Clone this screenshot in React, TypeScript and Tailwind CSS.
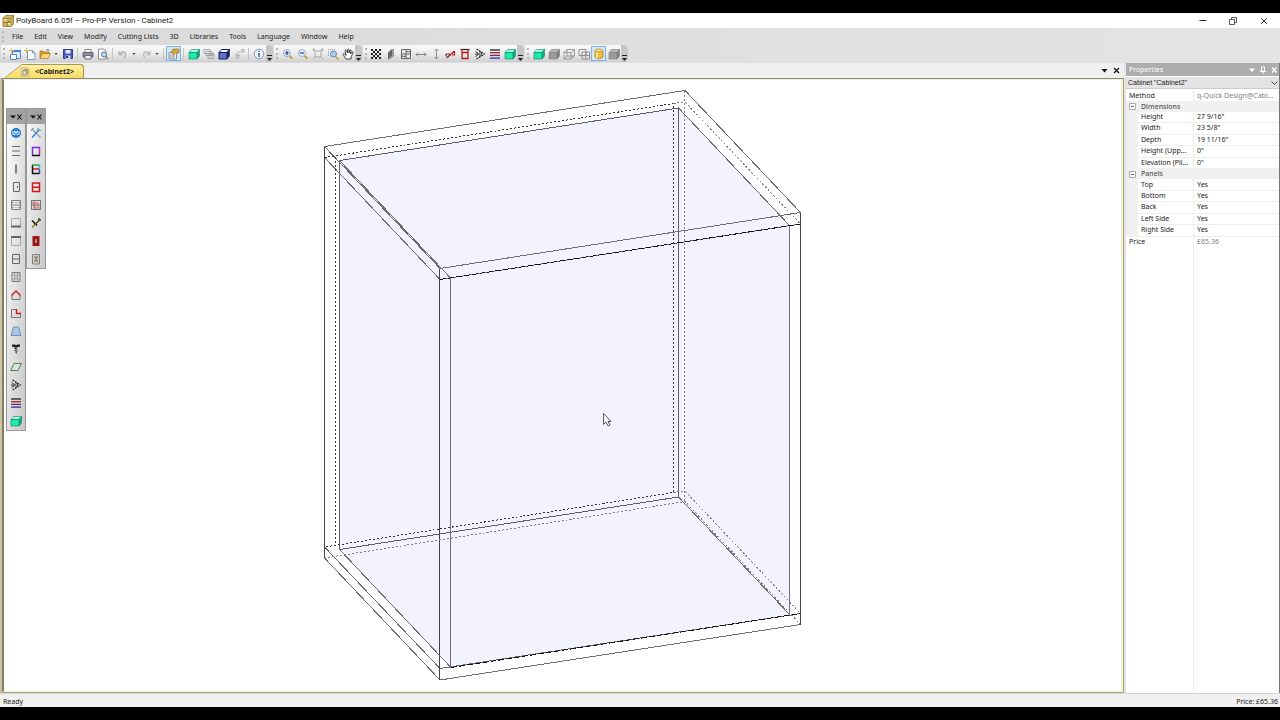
import { useState } from "react";
import type { ReactNode } from "react";

const MENUS = ["File", "Edit", "View", "Modify", "Cutting Lists", "3D", "Libraries", "Tools", "Language", "Window", "Help"];

const DIMENSIONS = [
  ["Height", '27 9/16"'],
  ["Width", '23 5/8"'],
  ["Depth", '19 11/16"'],
  ["Height (Upp...", '0"'],
  ["Elevation (Pli...", '0"'],
];

const PANELS = ["Top", "Bottom", "Back", "Left Side", "Right Side"];

function Cube({ fill = "#1eeaae", top = "#9dffe6", side = "#0cb884", stroke = "#0b7a5e" }) {
  return (
    <>
      <path d="M3.5 1.5h8l-2.5 3h-8z" fill={top} stroke={stroke} strokeWidth=".6" />
      <path d="M9 4.500l2.500-3v6.500l-2.500 3z" fill={side} stroke={stroke} strokeWidth=".6" />
      <path d="M1 4.500h8v6.500h-8z" fill={fill} stroke={stroke} strokeWidth=".6" />
    </>
  );
}

function Lens({ sign }: { sign: ReactNode }) {
  return (
    <>
      <path d="M7.500 8l3 2.700" stroke="#c99a2e" strokeWidth="1.800" />
      <circle cx="5" cy="5" r="3.500" fill="#e4f0fb" stroke="#8fa5c2" strokeWidth=".9" />
      <g stroke="#1c3f8f" strokeWidth="1.200">{sign}</g>
    </>
  );
}

const greyCube = <Cube fill="#9a9a9a" top="#b5b5b5" side="#7c7c7c" stroke="#808080" />;

const checker = Array.from({ length: 25 }, (_, i) => i)
  .filter((i) => i % 2 === 0)
  .map((i) => <rect key={i} x={1 + (i % 5) * 2} y={1 + Math.floor(i / 5) * 2} width="2" height="2" fill="#222" />);

const ICONS: Record<string, ReactNode> = {
  newProject: (
    <>
      <path d="M3.500 2.500h8v8h-8z" fill="#dbe9fb" stroke="#5b87c0" />
      <path d="M3 2h9v2H3z" fill="#3d7fd0" />
      <path d="M1.500 6.500h6v5h-6z" fill="#f6f9ff" stroke="#5b87c0" />
      <path d="M2.500 0v5M0 2.500h5" stroke="#e5c35a" />
    </>
  ),
  newFile: (
    <>
      <path d="M3.500 2.500h5l2.500 2.500v6.500H3.500z" fill="#f5f9ff" stroke="#7d97bb" />
      <path d="M8.500 2.500V5H11" fill="none" stroke="#7d97bb" />
      <path d="M2.500 0v5M0 2.500h5" stroke="#e5b93a" />
    </>
  ),
  open: (
    <>
      <path d="M1 10V3h3l1 1h5v2" fill="#d9a02c" stroke="#a87414" strokeWidth=".7" />
      <path d="M1 10.500l2.500-5h8l-2.500 5z" fill="#ffd977" stroke="#a87414" strokeWidth=".7" />
      <path d="M7 2.500q2-2 3.500 0" fill="none" stroke="#3d6fb4" />
    </>
  ),
  save: (
    <>
      <path d="M1.500 1.500h9v9h-9z" fill="#4a55b8" stroke="#343d92" />
      <path d="M3.500 2h5v3.500h-5z" fill="#e6ecff" />
      <path d="M3.500 7.500h5V11h-5z" fill="#c9d1ee" />
      <path d="M4 8h2v2H4z" fill="#232b7a" />
    </>
  ),
  print: (
    <>
      <path d="M3 1.500h6V5H3z" fill="#fff" stroke="#667" strokeWidth=".8" />
      <path d="M1 4.500h10v4.500H1z" fill="#8a93a3" stroke="#4c5563" strokeWidth=".8" />
      <path d="M3 7.500h6v3.500H3z" fill="#eef3fb" stroke="#4c5563" strokeWidth=".8" />
    </>
  ),
  preview: (
    <>
      <path d="M1.500 1h5.500l2 2v8h-7.500z" fill="#fff" stroke="#778" strokeWidth=".8" />
      <circle cx="7" cy="6.500" r="2.500" fill="#b9dcf5" stroke="#49749f" />
      <path d="M8.800 8.500l2.500 2.500" stroke="#b78b2d" strokeWidth="1.500" />
    </>
  ),
  undo: <path d="M2 3v3.500h3.500M2.500 6q4.500-4 6 0q.5 2.500-2 4" fill="none" stroke="#b2b2b2" strokeWidth="1.300" />,
  redo: <path d="M10 3v3.500H6.500M9.500 6q-4.500-4-6 0q-.5 2.500 2 4" fill="none" stroke="#bcbcbc" strokeWidth="1.300" />,
  props: (
    <>
      <path d="M1 4.500h7.500v6.500H1z" fill="#eef0f2" stroke="#6e7780" strokeWidth=".8" />
      <path d="M2 7h5M2 9h5" stroke="#6e7780" strokeWidth=".8" />
      <path d="M3 4l2-3h6v4H7.500L6 6.500z" fill="#dba83d" stroke="#8c6720" strokeWidth=".6" />
    </>
  ),
  cube: <Cube />,
  greyCube,
  copies: (
    <g fill="#eee" stroke="#9a9a9a" strokeWidth=".8">
      <path d="M1 1.500h6v4H1zM3 3.500h6v4H3zM5 5.500h6v5H5z" />
      <path d="M5 7h6M7 5.500v5M9 5.500v5" />
    </g>
  ),
  blueCube: (
    <>
      <path d="M3.500 1.500h8l-2.500 3h-8z" fill="#eef1ff" stroke="#141a55" />
      <path d="M9 4.500l2.500-3v6.500l-2.500 3z" fill="#1a2470" stroke="#141a55" strokeWidth=".6" />
      <path d="M1 4.500h8v6.500h-8z" fill="#5f6fc8" stroke="#141a55" />
    </>
  ),
  nodes: (
    <g fill="none" stroke="#aaa" strokeWidth=".9">
      <path d="M8.500 1.500h2.500V4H8.500zM5 4h2.500M2 7h5l-2 4M4 4.500v6M2 11l3-4" />
    </g>
  ),
  info: (
    <>
      <circle cx="6" cy="6" r="4.800" fill="#f0f6ff" stroke="#8796ad" />
      <path d="M6 5v4M6 2.800v1.200" stroke="#1c63c7" strokeWidth="1.500" />
    </>
  ),
  zoomIn: <Lens sign={<path d="M3 5h4M5 3v4" />} />,
  zoomOut: <Lens sign={<path d="M3 5h4" />} />,
  fit: <path d="M3 3h6v6H3zM1 1l2 2M11 1L9 3M1 11l2-2M11 11L9 9M1 3V1h2M9 1h2v2" fill="none" stroke="#999" strokeWidth=".8" />,
  zoomArea: (
    <>
      <path d="M1 1.500h8M1.500 1v8" stroke="#999" strokeDasharray="1 1" />
      <path d="M8.500 8.500l3 3" stroke="#c99a2e" strokeWidth="1.500" />
      <circle cx="6.500" cy="6" r="3" fill="#a9cdee" stroke="#6b87a9" />
    </>
  ),
  hand: <path d="M4 11L1 6.500q0-1.500 1.500-.5L4 7.500L3 2.500q1-1.500 1.500 0L5.500 5V1.500q1-1 1.500 0V5l1-3q1-.5 1 .5L8.500 6l1.500-2q1.500-.5 1 1L9 9v2z" fill="#fff" stroke="#222" strokeWidth=".8" />,
  checker: <>{checker}</>,
  slab: (
    <>
      <path d="M3 4.500l4-3.500v7l-4 3.500z" fill="#666" />
      <path d="M7 1h2v7L5 11.500H3L7 8z" fill="#999" />
    </>
  ),
  layout: <path d="M1.500 1.500h9v9h-9zM6 1.500v9M1.500 6h9M6 3.700h4.500M1.500 8.300H6" fill="none" stroke="#666" />,
  horizontal: <path d="M1 6.500h10M3 4.500l-2 2l2 2M9 4.500l2 2l-2 2" fill="none" stroke="#808080" />,
  vertical: <path d="M6.500 1v10M4.500 3l2-2l2 2M4.500 9l2 2l2-2" fill="none" stroke="#909090" />,
  measure: (
    <>
      <path d="M1.500 6l2 4L5.500 6.500" fill="none" stroke="#222" />
      <path d="M2 6h4M5 8l5.500-5M8 7h2.500V3.500" fill="none" stroke="#b2191f" strokeWidth="1.200" />
    </>
  ),
  frame: (
    <>
      <path d="M1.500 1.500h9" stroke="#222" strokeWidth="1.200" />
      <path d="M3 4.500h6v6H3z" fill="none" stroke="#b2191f" strokeWidth="1.300" />
      <path d="M3 1v3M9 1v3" stroke="#b2191f" strokeWidth="1.200" />
    </>
  ),
  eye: (
    <>
      <path d="M2.500 1l8 5l-8 5" fill="none" stroke="#222" strokeDasharray="2 .8" strokeWidth="1.100" />
      <path d="M1 6h5M5 3.500l3 2.500l-3 2.500M1.500 3.500l3 2M1.500 8.500l3-2" fill="none" stroke="#222" strokeWidth=".9" />
    </>
  ),
  layers: (
    <g strokeWidth="1.300">
      <path d="M1 2h10" stroke="#222" />
      <path d="M1 4.700h10" stroke="#a01d37" />
      <path d="M1 7.400h10" stroke="#7a2a48" />
      <path d="M1 10.100h10" stroke="#2630b5" />
    </g>
  ),
  wireCube: <path d="M1 4.500h7V11H1zM1 4.500l3-3h7.500V8L8 11M8 4.500l3.500-3M4 1.500V8h7.500M4 8l-3 3" fill="none" stroke="#888" strokeWidth=".8" />,
  wireWindow: <path d="M1 1.500h7v6H1zM4 4h7.500v7H4zM7.700 4v7M4 7.500h7.500" fill="none" stroke="#888" strokeWidth=".9" />,
  cylinder: (
    <>
      <path d="M2 2.500v7q4 2.500 8 0v-7z" fill="#eebd3a" stroke="#a77a17" strokeWidth=".7" />
      <path d="M4 3v7" stroke="#fff0b0" strokeWidth="1.500" />
      <ellipse cx="6" cy="2.500" rx="4" ry="1.400" fill="#ffe591" stroke="#a77a17" strokeWidth=".7" />
    </>
  ),
  wheel: (
    <>
      <circle cx="6" cy="6" r="5" fill="#1d7bd1" />
      <path d="M4 4l4 4M8 4L4 8M3 4.500v3M9 4.500v3" stroke="#fff" strokeWidth="1.100" />
    </>
  ),
  tools: (
    <>
      <path d="M2.500 2.500l8 8" stroke="#8fa3b3" strokeWidth="1.500" />
      <path d="M9.500 2.500L2 10.500" stroke="#3387d2" strokeWidth="1.500" />
      <path d="M1 3.500L3.500 1M8 1v2.500h3" fill="none" stroke="#7894a8" strokeWidth="1.200" />
    </>
  ),
  shelves: <path d="M2 1.500h8M2 6h8M2 10.500h8" stroke="#666" />,
  upright: <path d="M6 1.500v9" stroke="#555" strokeWidth="1.400" />,
  door: <path d="M3.500 1.500h6v9h-6zM7.500 5v2" fill="none" stroke="#666" />,
  drawers: <path d="M1.500 1.500h9v9h-9zM1.500 6h9M6 3v1M6 8v1M1.500 3.500h2M8.500 3.500h2M1.500 8.500h2M8.500 8.500h2" fill="none" stroke="#808080" />,
  base: (
    <>
      <path d="M1.500 9V1.500h9V9" fill="none" stroke="#aaa" />
      <path d="M1 9.500h10" stroke="#666" strokeWidth="2" />
    </>
  ),
  crown: (
    <>
      <path d="M1.500 3v7.500h9V3" fill="none" stroke="#aaa" />
      <path d="M1 2h10" stroke="#666" strokeWidth="2" />
    </>
  ),
  shelf: <path d="M2.500 1.500h7v9h-7zM2.500 6h7" fill="none" stroke="#666" />,
  backPanel: (
    <>
      <path d="M2 1.500h8v9H2z" fill="none" stroke="#777" />
      <path d="M4.500 2v8M7.500 2v8M2 4h8M4.500 6h3M2 8h8" fill="none" stroke="#999" strokeWidth=".8" />
    </>
  ),
  roof: (
    <>
      <path d="M2 6v4.500h8V6" fill="none" stroke="#777" />
      <path d="M1.500 6.500L6 2l4.500 4.500" fill="none" stroke="#d01818" strokeWidth="1.400" />
    </>
  ),
  notch: (
    <>
      <path d="M6 2.500H1.500v8h9V7" fill="none" stroke="#777" />
      <path d="M6.500 2v4.500H11" fill="none" stroke="#d01818" strokeWidth="1.400" />
    </>
  ),
  trapezoid: <path d="M3.500 2h5l2.500 8.500H1z" fill="#a9c6ea" stroke="#5f7da3" strokeWidth=".8" />,
  screw: (
    <>
      <path d="M2 1.500h3l1 1l1-1h3v2L7 4.500H5l-3-1z" fill="#222" />
      <path d="M6 4v2M4.500 5.500l3 1M4.500 7.500l3 1M5.500 9.500l1.500 .5" fill="none" stroke="#333" strokeWidth="1.100" />
    </>
  ),
  parallelogram: <path d="M4 2.500h7.500l-3.500 7H.7z" fill="#cfead0" stroke="#5a6b5a" strokeWidth=".9" />,
  colorFrame: (
    <>
      <path d="M2.500 10.500v-8h7" fill="none" stroke="#7a2ad8" strokeWidth="1.500" />
      <path d="M9.500 1.700v8.500" stroke="#c029a9" strokeWidth="1.500" />
      <path d="M2 10.500h8" stroke="#111" strokeWidth="1.500" />
    </>
  ),
  colorShelves: (
    <g fill="none" strokeWidth="1.500">
      <path d="M2.500 6V2" stroke="#111" />
      <path d="M2 2h7" stroke="#17a53a" />
      <path d="M9.500 1.500v4" stroke="#28c7d4" />
      <path d="M2.500 6h7" stroke="#d01818" />
      <path d="M2.500 6v4.500h7" stroke="#111" />
      <path d="M9.500 6.500v4" stroke="#2a3ce0" />
    </g>
  ),
  redShelf: <path d="M2.500 2h7v8.500h-7zM2.500 6.200h7" fill="none" stroke="#d01818" strokeWidth="1.500" />,
  redGrid: (
    <>
      <path d="M1.500 1.500h9v9h-9zM4 1.500v9M1.500 6h9" fill="none" stroke="#666" strokeWidth=".9" />
      <path d="M2 4h6v4M5 6v3h5" fill="none" stroke="#e05858" />
    </>
  ),
  drill: (
    <>
      <path d="M2 3.500l5 5M8.500 1.500l2 2" stroke="#111" strokeWidth="1.600" />
      <path d="M2 10.500L10 2.500" stroke="#8a7b14" strokeWidth="1.400" />
      <path d="M5 7.500l5-5" stroke="#222" />
    </>
  ),
  redDoor: (
    <>
      <path d="M2.500 1h7v10h-7z" fill="#a31515" />
      <path d="M4.500 3.500h3v5h-3z" fill="#c98585" stroke="#6e0c0c" strokeWidth=".8" />
    </>
  ),
  safe: (
    <>
      <path d="M2.500 1.500h7v9.500h-7z" fill="#d2cab6" stroke="#777" strokeWidth=".9" />
      <path d="M4 4h4L5 6l3 2H4" fill="none" stroke="#666" strokeWidth=".9" />
    </>
  ),
  cabinetFile: (
    <>
      <path d="M1.500 1h7l2 2v8h-9z" fill="#fbf6e0" stroke="#a39458" strokeWidth=".8" />
      <path d="M3.500 4l1.500-1h4v5l-1.500 1.500h-4zM3.500 4.500h4v5" fill="#efe3b8" stroke="#7b6a35" strokeWidth=".8" />
    </>
  ),
};

function Icon({ name, className = "size-3" }: { name: string; className?: string }) {
  return (
    <svg viewBox="0 0 12 12" className={`${className} shrink-0`} aria-hidden="true">
      {ICONS[name]}
    </svg>
  );
}

function ToolButton({ icon, active = false }: { icon: string; active?: boolean }) {
  return (
    <button
      type="button"
      aria-label={icon}
      className={`flex h-[15px] w-[15px] min-w-0 items-center justify-center border ${
        active ? "border-[#7fb2e0] bg-[#d3e8f9]" : "border-transparent hover:bg-white/60"
      }`}
    >
      <Icon name={icon} />
    </button>
  );
}

function DropArrow() {
  return (
    <button type="button" aria-label="More" className="flex h-[15px] w-2 shrink-0 items-center justify-center text-[#444]">
      <svg viewBox="0 0 5 3" className="h-[2px] w-1" aria-hidden="true">
        <path d="M0 0h5L2.500 3z" fill="currentColor" />
      </svg>
    </button>
  );
}

function Toolbar({ items, className = "" }: { items: string[]; className?: string }) {
  return (
    <div
      role="toolbar"
      className={`flex h-[17px] items-center rounded-r-[4px] bg-linear-to-b from-[#fafafa] via-[#ececec] to-[#cfcfcf] ${className}`}
    >
      <span className="mx-[2px] h-[11px] shrink-0 border-l-2 border-dotted border-[#b5b5b5]" />
      {items.map((item, i) => {
        if (item === "|") return <span key={i} className="mx-[2px] h-3 w-px bg-[#c4c4c4]" />;
        if (item === "v") return <DropArrow key={i} />;
        return <ToolButton key={i} icon={item.replace("*", "")} active={item.endsWith("*")} />;
      })}
      <button type="button" aria-label="Toolbar options" className="flex h-[17px] w-[7px] shrink-0 items-end justify-center rounded-r-[4px] bg-[#c6c6c6] pb-px">
        <svg viewBox="0 0 5 6" className="h-[6px] w-[5px]" aria-hidden="true">
          <path d="M0 .5h5" stroke="#222" />
          <path d="M0 3h5L2.500 6z" fill="#222" />
        </svg>
      </button>
    </div>
  );
}

function Palette({ items, className }: { items: string[]; className: string }) {
  return (
    <div className={`flex w-5 flex-col border border-[#989898] bg-linear-to-br from-[#fbfbfb] to-[#c8c8c8] ${className}`}>
      <div className="flex h-[15px] items-center justify-center bg-[#a3a3a3]">
        <svg viewBox="0 0 14 8" className="h-2 w-[14px]" aria-hidden="true">
          <path d="M1 2.500h6L4 5.500z" fill="#111" />
          <path d="M8.500 1.500l4 5M12.500 1.500l-4 5" stroke="#111" strokeWidth="1.100" />
        </svg>
      </div>
      {items.map((item) => (
        <button key={item} type="button" aria-label={item} className="flex h-[18px] items-center justify-center hover:bg-white/60">
          <Icon name={item} />
        </button>
      ))}
    </div>
  );
}

// Visible edges of the carcass. Hidden edges are drawn dashed further down.
const UPRIGHTS = "M324.500 146.500V558M439.500 268.500V680M800.500 212.500V624.500";

const EDGES = [
  "M324.500 146.500L685 90.500L800.500 212.500L440 268.500Z",
  "M324.500 157.500L440 279.500L800.500 224",
  "M324.500 547L440 668.500L800.500 613.500",
  "M324.500 558L440 680L800.500 624.500",
  "M339.500 160.500L451 278.500M678.500 108L789.500 225.500",
  "M339.500 549.500L451 667.500M678.500 497L789.500 614.500",
];

function CabinetView() {
  return (
    <svg className="block h-full w-full" role="img" aria-label="Cabinet2">
      <g transform="translate(-4 -80)" fill="none" shapeRendering="crispEdges">
        <path d="M339.500 160.500L678.500 108L789.500 225.500V614.500L451 667.500L339.500 549.500Z" fill="#f3f3ff" />
        <path d="M339.500 549.500V160.500L678.500 108V497Z" stroke="#5c5c74" />
        <path d="M450.500 278.500V667.500M789.500 225.500V614.500" stroke="#6c6c90" />
        {EDGES.map((d) => (
          <path key={d} d={d} stroke="#6e6e6e" />
        ))}
        <path d={UPRIGHTS} stroke="#444" />
        <path d="M440 279.500L800.500 224M451 667.500L800.500 613.500" stroke="#111" strokeDasharray="6 2" />
        <path d="M324.500 157.500L673.500 103.500V492.500L324.500 547M335.500 157V546" stroke="#333" strokeDasharray="2 2" />
        <path d="M673.500 103.500L685 102L800.500 224M684.500 91V502M673.500 492.500L685 491L800.500 613.500M324.500 558L685 501.500L800.500 624.500" stroke="#808080" strokeDasharray="2 2" />
        <path d="M603.500 413.500v11l2.500-2.500l2 4l2-1l-2-3.500h3z" fill="#fff" stroke="#444" strokeWidth=".9" shapeRendering="auto" />
      </g>
    </svg>
  );
}

function GroupRow({ label, open, onToggle }: { label: string; open: boolean; onToggle: () => void }) {
  return (
    <tr className="bg-[#f0f0f0]">
      <td className="p-0 text-center align-middle">
        <button type="button" aria-label={label} aria-expanded={open} onClick={onToggle} className="mx-auto block">
          <svg viewBox="0 0 7 7" className="size-[7px]" aria-hidden="true">
            <path d="M.5 .5h6v6h-6z" fill="#fff" stroke="#aaa" />
            <path d={open ? "M2 3.500h3" : "M2 3.500h3M3.500 2v3"} stroke="#666" />
          </svg>
        </button>
      </td>
      <th colSpan={2} scope="colgroup" className="p-0 pl-[3px] text-left font-medium text-[#555]">
        {label}
      </th>
    </tr>
  );
}

function PropertyRow({ name, value }: { name: string; value: string }) {
  return (
    <tr>
      <td className="bg-[#f0f0f0] p-0" />
      <th scope="row" className="border-b border-[#eee] p-0 pl-[3px] text-left font-normal whitespace-nowrap">
        {name}
      </th>
      <td className="border-b border-l border-[#eee] p-0 pl-[3px]">{value}</td>
    </tr>
  );
}

function PropertiesPanel() {
  const [dimensionsOpen, setDimensionsOpen] = useState(true);
  const [panelsOpen, setPanelsOpen] = useState(true);

  return (
    <aside className="flex w-[154px] shrink-0 flex-col border-r border-[#777] bg-white">
      <div className="flex h-[13px] items-center bg-[#adadad] pl-[3px] text-white">
        <h2 className="flex-1">Properties</h2>
        <svg viewBox="0 0 32 8" className="h-2 w-8" aria-hidden="true" fill="none" stroke="#fff">
          <path d="M2 2.500h6L5 6z" fill="#fff" stroke="none" />
          <path d="M14.500 1v4h3V1zM13 5.500h6M16 5v3" />
          <path d="M25 1.500l4.500 5M29.500 1.500L25 6.500" strokeWidth="1.300" />
        </svg>
      </div>
      <div className="relative mt-px mb-px">
        <select aria-label="Object" className="block h-3 w-full appearance-none border-b border-[#ccc] bg-[#e3e3e3] pl-[2px] font-['Liberation_Sans',sans-serif]">
          <option>Cabinet "Cabinet2"</option>
        </select>
        <svg viewBox="0 0 7 4" className="pointer-events-none absolute top-1 right-px h-1 w-[7px]" aria-hidden="true">
          <path d="M.5 .5l3 3l3-3" fill="none" stroke="#444" />
        </svg>
      </div>
      <div className="flex-1 bg-[linear-gradient(to_right,transparent_67px,#eee_67px,#eee_68px,transparent_68px)] pt-px">
        <table className="h-[156px] w-full table-fixed border-separate border-spacing-0 leading-[10px]">
          <colgroup>
            <col className="w-3" />
            <col className="w-[55px]" />
            <col />
          </colgroup>
          <tbody>
            <tr>
              <th colSpan={2} scope="row" className="p-0 pl-[3px] text-left font-normal">
                Method
              </th>
              <td className="border-l border-[#eee] p-0 pl-[3px] whitespace-nowrap text-[#808080]">q-Quick Design@Cabi...</td>
            </tr>
            <GroupRow label="Dimensions" open={dimensionsOpen} onToggle={() => setDimensionsOpen(!dimensionsOpen)} />
            {dimensionsOpen && DIMENSIONS.map(([name, value]) => <PropertyRow key={name} name={name} value={value} />)}
            <GroupRow label="Panels" open={panelsOpen} onToggle={() => setPanelsOpen(!panelsOpen)} />
            {panelsOpen && PANELS.map((name) => <PropertyRow key={name} name={name} value="Yes" />)}
            <tr>
              <th colSpan={2} scope="row" className="p-0 pl-[3px] text-left font-normal">
                Price
              </th>
              <td className="border-l border-[#eee] p-0 pl-[3px] text-[#808080]">£65.36</td>
            </tr>
          </tbody>
        </table>
      </div>
    </aside>
  );
}

export default function App() {
  return (
    <div className="flex h-screen flex-col bg-black py-[13px] font-['Noto_Sans','Open_Sans',sans-serif] text-[7px] leading-[10px] text-[#222]">
      <header className="flex h-[15px] shrink-0 items-center bg-white pl-[2px]">
        <svg viewBox="0 0 12 12" className="size-3" aria-hidden="true">
          <path d="M1 3l3-2.500h7.500V9L9 11.500H1z" fill="#d9b75c" stroke="#8b6f25" strokeWidth=".8" />
          <path d="M1 3.500h8v8M9 3.500l2.500-3M5 3.500v8M1 7.500h8M6 5h2v1.500H6z" fill="#fff3bf" stroke="#8b6f25" strokeWidth=".8" />
        </svg>
        <h1 className="ml-[2px] flex-1 font-[Roboto,sans-serif] text-[8px]">PolyBoard 6.05f – Pro-PP Version - Cabinet2</h1>
        <div className="flex">
          <button type="button" aria-label="Minimize" className="flex h-[15px] w-[30px] items-center justify-center">
            <svg viewBox="0 0 8 8" className="size-2" aria-hidden="true">
              <path d="M.5 3.500h7" stroke="#333" />
            </svg>
          </button>
          <button type="button" aria-label="Restore" className="flex h-[15px] w-[30px] items-center justify-center">
            <svg viewBox="0 0 8 8" className="size-2" aria-hidden="true">
              <path d="M.5 2.500h5v5h-5zM2.500 2V.5h5v5H6" fill="none" stroke="#333" strokeWidth=".8" />
            </svg>
          </button>
          <button type="button" aria-label="Close" className="flex h-[15px] w-8 items-center justify-center">
            <svg viewBox="0 0 8 8" className="size-2" aria-hidden="true">
              <path d="M1 1l6 6M7 1L1 7" stroke="#222" strokeWidth=".9" />
            </svg>
          </button>
        </div>
      </header>

      <nav className="flex h-[17px] shrink-0 items-center gap-px bg-linear-to-r from-[#dadada] to-[#e4e4e4]">
        <span className="mx-[2px] h-[11px] border-l-2 border-dotted border-[#b5b5b5]" />
        {MENUS.map((menu) => (
          <button key={menu} type="button" className="px-[5px] hover:bg-white/60">
            {menu}
          </button>
        ))}
      </nav>

      <div className="flex h-[18px] shrink-0 gap-px bg-linear-to-r from-[#dadada] to-[#e4e4e4] pl-px">
        <Toolbar
          items={["newProject", "newFile", "open", "v", "save", "|", "print", "preview", "|", "undo", "v", "redo", "v", "|", "props*", "|", "cube", "copies", "blueCube", "nodes", "|", "info"]}
        />
        <Toolbar items={["zoomIn", "zoomOut", "fit", "zoomArea", "hand"]} />
        <Toolbar
          className="w-[161px]"
          items={["checker", "slab", "layout", "horizontal", "vertical", "measure", "frame", "eye", "layers", "cube"]}
        />
        <Toolbar items={["cube", "greyCube", "wireCube", "wireWindow", "cylinder*", "greyCube"]} />
      </div>

      <div className="flex min-h-0 flex-1 gap-[2px] bg-[#e3e3e3]">
        <main className="flex min-w-0 flex-1 flex-col">
          <div className="flex h-[15px] shrink-0 items-end bg-[#f0f0f0] pl-1">
            <div className="bg-[#a8975a] pt-px pr-px [clip-path:polygon(0_100%,18px_0,78px_0,100%_2px,100%_100%)]">
              <button
                type="button"
                className="flex h-[13px] w-[79px] items-center gap-[5px] bg-linear-to-b from-[#fff0a0] to-[#f7db62] pl-4 font-bold [clip-path:polygon(1px_100%,18px_0,77px_0,100%_2px,100%_100%)]"
              >
                <Icon name="cabinetFile" className="size-[10px]" />
                &lt;Cabinet2&gt;
              </button>
            </div>
            <div className="ml-auto flex h-[15px] items-center gap-[5px] pr-1">
              <button type="button" aria-label="Window list">
                <svg viewBox="0 0 7 7" className="size-[7px]" aria-hidden="true">
                  <path d="M.5 2h6L3.500 5.500z" fill="#111" />
                </svg>
              </button>
              <button type="button" aria-label="Close tab">
                <svg viewBox="0 0 7 7" className="size-[7px]" aria-hidden="true">
                  <path d="M1 1l5 5M6 1L1 6" stroke="#111" strokeWidth="1.200" />
                </svg>
              </button>
            </div>
          </div>
          <div className="min-h-0 flex-1 border-t border-r border-b border-l-2 border-t-[#888] border-r-[#a3a37c] border-b-[#a9a97e] border-l-[#cdc5a6]">
            <div className="relative h-full overflow-hidden border-t border-r-2 border-b border-l-2 border-[#f5f1cf] border-l-[#857c68] bg-white">
              <CabinetView />
              <Palette
                className="absolute top-7 left-[2px]"
                items={["wheel", "shelves", "upright", "door", "drawers", "base", "crown", "shelf", "backPanel", "roof", "notch", "trapezoid", "screw", "parallelogram", "eye", "layers", "cube"]}
              />
              <Palette
                className="absolute top-7 left-[22px]"
                items={["tools", "colorFrame", "colorShelves", "redShelf", "redGrid", "drill", "redDoor", "safe"]}
              />
            </div>
          </div>
        </main>
        <PropertiesPanel />
      </div>

      <footer className="flex h-[14px] shrink-0 items-center justify-between border-t border-[#d5d5d5] bg-[#f0f0f0] pt-[2px] pr-[2px] pl-[3px]">
        <span>Ready</span>
        <span>Price: £65.36</span>
      </footer>
    </div>
  );
}
